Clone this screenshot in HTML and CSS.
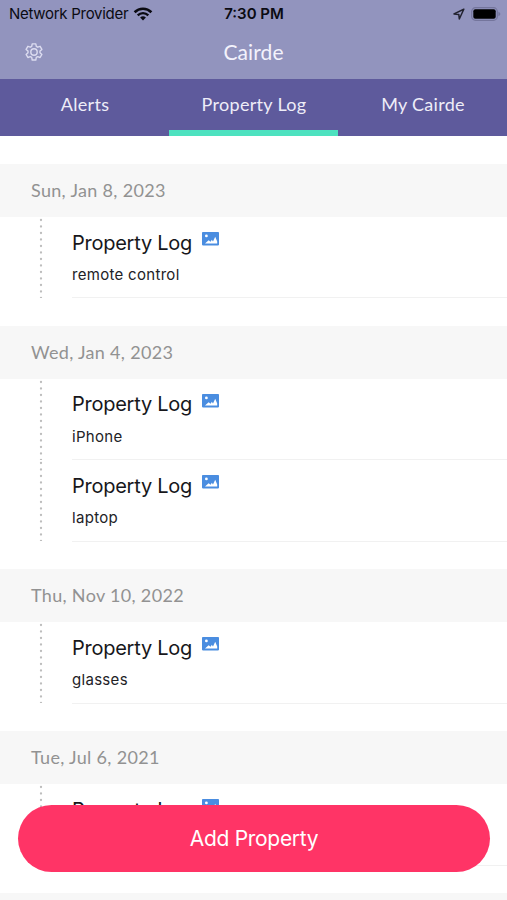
FILE: index.html
```html
<!DOCTYPE html>
<html lang="en">
<head>
<meta charset="utf-8">
<title>Cairde</title>
<link rel="stylesheet" href="styles.css">
</head>
<body>
<svg width="0" height="0" class="defs" aria-hidden="true">
  <symbol id="photo" viewBox="0 0 17 14">
    <rect width="17" height="13.4" rx=".8" fill="#4a8de0"/>
    <circle cx="4.4" cy="3.9" r="1.4" fill="#fff"/>
    <path d="M3 11.6 6.6 8.2l2 1.6 1.2-2 1.2 1.6 2.2-4.6 2 4.6v2.2z" fill="#fff"/>
  </symbol>
  <symbol id="dots" viewBox="0 0 4 81">
    <path d="M2 3v78.2" stroke="#bdbdbd" stroke-width="2.3" stroke-linecap="round" stroke-dasharray="0 6.5" fill="none"/>
  </symbol>
</svg>
<div class="screen">
  <header class="top">
    <div class="status">
      <div class="carrier"><span>Network Provider</span>
        <svg width="20" height="14" viewBox="0 0 20 14" fill="none" stroke="#0b0b12"><path d="M1.6 5.2a12 12 0 0 1 16.8 0" stroke-width="2.6"/><path d="M4.7 8.4a7.5 7.5 0 0 1 10.6 0" stroke-width="2.3"/><path d="M10 13.4 7.1 10.6a4.1 4.1 0 0 1 5.8 0z" fill="#0b0b12" stroke="none"/></svg>
      </div>
      <div class="time">7:30 PM</div>
      <div class="indicators">
        <svg width="12" height="12" viewBox="0 0 12 12" fill="none" stroke="#22222f" stroke-width="1.5" stroke-linejoin="round"><path d="M10.8 1.2 1 5.9l4.8.5.5 4.6z"/></svg>
        <svg width="30" height="14" viewBox="0 0 30 14"><rect x=".7" y=".7" width="25.6" height="12.6" rx="3.8" fill="none" stroke="#74759c" stroke-width="1.2"/><rect x="2.3" y="2.3" width="22.4" height="9.4" rx="2" fill="#000"/><path d="M27.4 4.8q2 .7 2 2.2t-2 2.2z" fill="#74759c"/></svg>
      </div>
    </div>
    <div class="nav">
      <svg class="gear" width="20" height="20" viewBox="0 0 20 20" fill="none" stroke="#dcdcf0" stroke-width="1.4" stroke-linejoin="round"><path d="M8.2 1.2h3.6l.5 2.5 1.4.8 2.4-.9 1.8 3.1-1.9 1.7v1.6l1.9 1.7-1.8 3.1-2.4-.9-1.4.8-.5 2.6H8.2l-.5-2.6-1.4-.8-2.4.9-1.8-3.1L4 10V8.4L2.1 6.7l1.8-3.1 2.4.9 1.4-.8z" transform="translate(0 .7)"/><circle cx="10" cy="10" r="3.2"/></svg>
      <h1>Cairde</h1>
    </div>
  </header>
  <nav class="tabs">
    <div class="tab">Alerts</div>
    <div class="tab active">Property Log</div>
    <div class="tab">My Cairde</div>
  </nav>
  <main class="log">
    <section>
      <h2>Sun, Jan 8, 2023</h2>
      <article><svg class="dots"><use href="#dots"/></svg><div class="entry"><h3><span>Property Log</span><svg class="photo"><use href="#photo"/></svg></h3><p>remote control</p></div></article>
    </section>
    <section>
      <h2>Wed, Jan 4, 2023</h2>
      <article><svg class="dots"><use href="#dots"/></svg><div class="entry"><h3><span>Property Log</span><svg class="photo"><use href="#photo"/></svg></h3><p>iPhone</p></div></article>
      <article><svg class="dots"><use href="#dots"/></svg><div class="entry"><h3><span>Property Log</span><svg class="photo"><use href="#photo"/></svg></h3><p>laptop</p></div></article>
    </section>
    <section>
      <h2>Thu, Nov 10, 2022</h2>
      <article><svg class="dots"><use href="#dots"/></svg><div class="entry"><h3><span>Property Log</span><svg class="photo"><use href="#photo"/></svg></h3><p>glasses</p></div></article>
    </section>
    <section>
      <h2>Tue, Jul 6, 2021</h2>
      <article><svg class="dots"><use href="#dots"/></svg><div class="entry"><h3><span>Property Log</span><svg class="photo"><use href="#photo"/></svg></h3></div></article>
    </section>
    <section><h2></h2></section>
  </main>
  <button class="add">Add Property</button>
</div>
</body>
</html>
```
FILE: styles.css
```css
* { box-sizing: border-box; }
body, h1, h2, h3, p { margin: 0; font-weight: 400; }
body { background: #fff; font-family: Inter, "Liberation Sans", sans-serif; }
.defs { position: absolute; }
.screen { position: relative; width: 507px; height: 900px; overflow: hidden; }
.top { height: 79px; background: #9294be; }
.status { display: grid; grid-template-columns: 1fr auto 1fr; height: 27px; align-items: center; padding: 0 6px 0 9px; color: #0b0b12; font-size: 15px; }
.carrier { display: flex; align-items: center; gap: 5px; white-space: nowrap; letter-spacing: -.28px; }
.time { font-weight: 600; margin-left: -2px; }
.indicators { display: flex; align-items: center; justify-content: flex-end; gap: 6px; }
.nav { display: grid; grid-template-columns: 1fr auto 1fr; align-items: center; height: 50px; padding: 0 24px; }
.gear { justify-self: start; }
.nav h1 { grid-column: 2; font: 400 21px/28px Lato, sans-serif; color: #f3f2fc; letter-spacing: .1px; }
.tabs { display: grid; grid-template-columns: repeat(3, 1fr); height: 57px; background: #5e5a9c; color: #eeedf8; font: 400 18px/51px Lato, sans-serif; text-align: center; }
.tab { padding-left: 1px; border-bottom: 6px solid transparent; letter-spacing: .3px; }
.tab.active { border-color: #4de2bf; }
.log { padding-top: 28px; }
section { padding-bottom: 27.7px; }
h2 { height: 53px; padding-left: 31px; background: #f7f7f7; color: #929292; font: 400 18px/52px Lato, sans-serif; letter-spacing: .32px; }
article { display: flex; height: 81.3px; padding-left: 39px; }
.dots { width: 4px; height: 81px; flex: none; }
.entry { flex: 1; margin-left: 29px; border-bottom: 1px solid #f1f1f1; }
h3 { display: flex; align-items: flex-start; gap: 10px; height: 42px; padding-top: 11.5px; font-size: 20px; line-height: 28px; color: #17171b; letter-spacing: -.25px; }
.photo { width: 17px; height: 14px; margin-top: 3.5px; }
.entry p { font-size: 15px; line-height: 31px; color: #222226; letter-spacing: .3px; }
.add { position: absolute; left: 18px; top: 805px; width: 472px; height: 67px; padding: 0; border: 0; border-radius: 34px; background: #ff3466; color: #fff; font: 400 21px/67px Inter, sans-serif; letter-spacing: -.3px; }
```
